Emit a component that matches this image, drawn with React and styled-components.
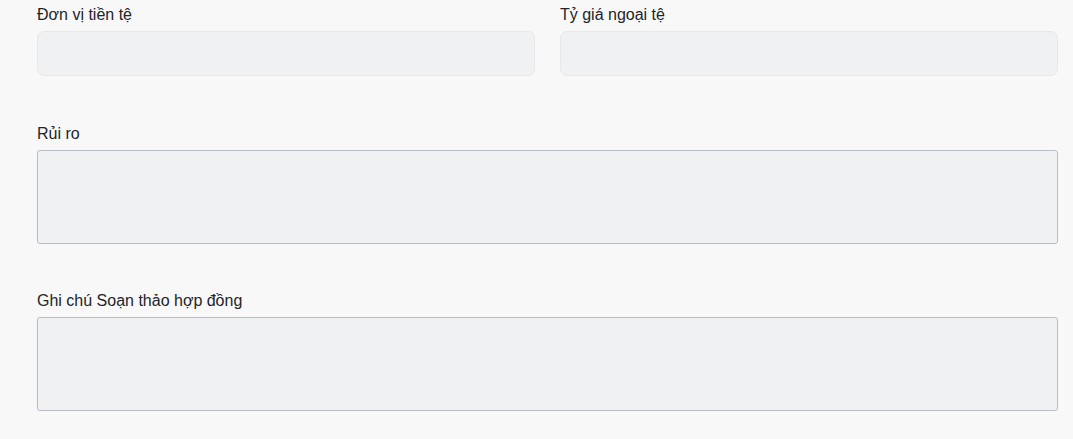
import React from 'react'
import styled, { createGlobalStyle } from 'styled-components'

const GlobalStyle = createGlobalStyle`
  body {
    margin: 0;
    background: #f8f8f8;
    font-family: "Liberation Sans", Arial, sans-serif;
  }
`

const Form = styled.div`
  padding: 5px 15px 20px 37px;
  display: flex;
  flex-direction: column;
  gap: 47px;
`

const Row = styled.div`
  display: grid;
  grid-template-columns: 1fr 1fr;
  column-gap: 25px;
  margin-bottom: 1px;
`

const Field = styled.div`
  display: flex;
  flex-direction: column;
`

const Label = styled.label`
  font-size: 16px;
  line-height: 20px;
  color: #212529;
  margin-bottom: 6px;
`

const Input = styled.input`
  box-sizing: border-box;
  height: 45px;
  width: 100%;
  background: #f0f1f3;
  border: 1px solid #e7e8eb;
  border-radius: 7px;
  outline: none;
`

const TextArea = styled.textarea`
  box-sizing: border-box;
  height: 94px;
  width: 100%;
  background: #f0f1f3;
  border: 1px solid #b9bcc7;
  border-radius: 3px;
  resize: none;
  outline: none;
  display: block;
`

export default function App() {
  return (
    <>
      <GlobalStyle />
      <Form>
        <Row>
          <Field>
            <Label>Đơn vị tiền tệ</Label>
            <Input disabled />
          </Field>
          <Field>
            <Label>Tỷ giá ngoại tệ</Label>
            <Input disabled />
          </Field>
        </Row>
        <Field>
          <Label>Rủi ro</Label>
          <TextArea disabled />
        </Field>
        <Field>
          <Label>Ghi chú Soạn thảo hợp đồng</Label>
          <TextArea disabled />
        </Field>
      </Form>
    </>
  )
}
